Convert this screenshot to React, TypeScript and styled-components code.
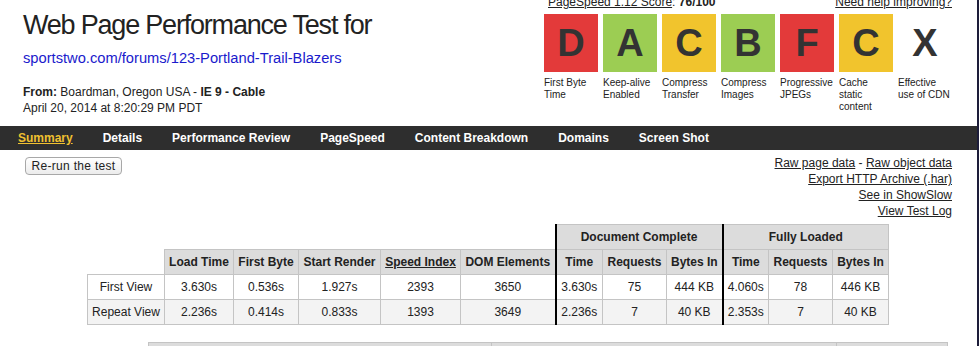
import React from "react";
import styled, { createGlobalStyle } from "styled-components";

const Global = createGlobalStyle`
  html, body { margin: 0; padding: 0; background: #fff; }
  body { font-family: "Liberation Sans", Arial, Helvetica, sans-serif; color: #222; overflow: hidden; }
`;

const Page = styled.div`
  width: 977px;
  height: 346px;
  border-right: 2px solid #1d1d3a;
  overflow: hidden;
`;

const Header = styled.header`
  display: flex;
  justify-content: space-between;
  align-items: flex-start;
  padding: 0 25px 0 23px;
  height: 126px;
`;

const TitleBlock = styled.div`
  padding-top: 8px;
`;

const Title = styled.h1`
  margin: 0;
  font-size: 27px;
  line-height: 34px;
  letter-spacing: -1.2px;
  font-weight: normal;
  color: #222;
`;

const UrlLink = styled.a`
  display: block;
  margin-top: 7px;
  font-size: 14.7px;
  line-height: 18px;
  color: #1a1acc;
  text-decoration: none;
`;

const Meta = styled.div`
  margin-top: 17px;
  font-size: 12px;
  line-height: 16px;
`;

const GradeBlock = styled.div`
  width: 408px;
  margin-top: -5px;
`;

const ScoreLine = styled.div`
  display: flex;
  justify-content: space-between;
  font-size: 12px;
  line-height: 14px;
  padding-left: 4px;
`;

const PlainLink = styled.a`
  color: #222;
  text-decoration: underline;
`;

const Grades = styled.div`
  display: flex;
  gap: 5px;
  margin-top: 5px;
`;

const Grade = styled.div`
  width: 54px;
`;

const GradeBox = styled.div<{ $bg: string }>`
  height: 58px;
  background: ${(p) => p.$bg};
  display: flex;
  align-items: center;
  justify-content: center;
  font-size: 38px;
  font-weight: bold;
  color: #333;
`;

const GradeLabel = styled.div`
  margin-top: 5px;
  font-size: 10px;
  line-height: 12px;
  color: #222;
  white-space: nowrap;
`;

const Nav = styled.nav`
  display: flex;
  height: 24px;
  align-items: center;
  background: #2e2e2e;
  padding-left: 3px;
`;

const NavItem = styled.a<{ $active?: boolean }>`
  padding: 0 15px;
  font-size: 12px;
  font-weight: bold;
  color: ${(p) => (p.$active ? "#f0c030" : "#fff")};
  text-decoration: ${(p) => (p.$active ? "underline" : "none")};
`;

const Toolbar = styled.div`
  display: flex;
  justify-content: space-between;
  align-items: flex-start;
  padding: 0 25px;
`;

const Button = styled.button`
  margin-top: 7px;
  width: 97px;
  height: 18px;
  padding: 0;
  border: 1px solid #a8a8a8;
  border-radius: 4px;
  background: linear-gradient(#ffffff, #ececec);
  font-family: "Liberation Sans", Arial, sans-serif;
  font-size: 12px;
  letter-spacing: 0.3px;
  color: #222;
`;

const Links = styled.div`
  margin-top: 5px;
  text-align: right;
  font-size: 12px;
  line-height: 16px;
`;

const Table = styled.table`
  border-collapse: collapse;
  table-layout: fixed;
  width: 801px;
  margin: 5px auto 0 87px;
  font-size: 12px;
`;

const Cell = styled.td<{ $thick?: boolean; $bg?: string }>`
  height: 24px;
  padding: 0 4px;
  border: 1px solid #c4c4c4;
  text-align: center;
  white-space: nowrap;
  background: ${(p) => p.$bg || "transparent"};
  ${(p) => (p.$thick ? "border-left: 2px solid #000;" : "")}
`;

const Head = styled(Cell).attrs({ as: "th" })`
  background: #dcdcdc;
  font-weight: bold;
`;

const Blank = styled.th`
  border: none;
  background: transparent;
`;

const SecondTable = styled.div`
  display: grid;
  grid-template-columns: 343px 345px 112px;
  margin: 17px 0 0 148px;
`;

const SecondHead = styled.div`
  height: 24px;
  background: #dcdcdc;
  border: 1px solid #c4c4c4;
  border-right: none;
  &:last-child { border-right: 1px solid #c4c4c4; }
`;

const grades = [
  { l: "D", bg: "#e33a3a", t: ["First Byte", "Time"] },
  { l: "A", bg: "#9ccd53", t: ["Keep-alive", "Enabled"] },
  { l: "C", bg: "#f1c42d", t: ["Compress", "Transfer"] },
  { l: "B", bg: "#9ccd53", t: ["Compress", "Images"] },
  { l: "F", bg: "#e33a3a", t: ["Progressive", "JPEGs"] },
  { l: "C", bg: "#f1c42d", t: ["Cache", "static", "content"] },
  { l: "X", bg: "transparent", t: ["Effective", "use of CDN"] },
];

const navItems = ["Summary", "Details", "Performance Review", "PageSpeed", "Content Breakdown", "Domains", "Screen Shot"];

const rows = [
  { name: "First View", bg: "#fff", v: ["3.630s", "0.536s", "1.927s", "2393", "3650", "3.630s", "75", "444 KB", "4.060s", "78", "446 KB"] },
  { name: "Repeat View", bg: "#f3f3f3", v: ["2.236s", "0.414s", "0.833s", "1393", "3649", "2.236s", "7", "40 KB", "2.353s", "7", "40 KB"] },
];

const widths = [77, 69, 65, 82, 80, 95, 47, 64, 56, 46, 64, 56];

export default function App() {
  return (
    <Page>
      <Global />
      <Header>
        <TitleBlock>
          <Title>Web Page Performance Test for</Title>
          <UrlLink href="#">sportstwo.com/forums/123-Portland-Trail-Blazers</UrlLink>
          <Meta>
            <div>
              <b>From:</b> Boardman, Oregon USA - <b>IE 9 - Cable</b>
            </div>
            <div>April 20, 2014 at 8:20:29 PM PDT</div>
          </Meta>
        </TitleBlock>
        <GradeBlock>
          <ScoreLine>
            <span>
              <PlainLink href="#">PageSpeed 1.12 Score</PlainLink>: <b>76/100</b>
            </span>
            <PlainLink href="#">Need help improving?</PlainLink>
          </ScoreLine>
          <Grades>
            {grades.map((g, i) => (
              <Grade key={i}>
                <GradeBox $bg={g.bg}>{g.l}</GradeBox>
                <GradeLabel>
                  {g.t.map((t) => (
                    <div key={t}>{t}</div>
                  ))}
                </GradeLabel>
              </Grade>
            ))}
          </Grades>
        </GradeBlock>
      </Header>
      <Nav>
        {navItems.map((n, i) => (
          <NavItem key={n} href="#" $active={i === 0}>
            {n}
          </NavItem>
        ))}
      </Nav>
      <Toolbar>
        <Button>Re-run the test</Button>
        <Links>
          <div>
            <PlainLink href="#">Raw page data</PlainLink> - <PlainLink href="#">Raw object data</PlainLink>
          </div>
          <div>
            <PlainLink href="#">Export HTTP Archive (.har)</PlainLink>
          </div>
          <div>
            <PlainLink href="#">See in ShowSlow</PlainLink>
          </div>
          <div>
            <PlainLink href="#">View Test Log</PlainLink>
          </div>
        </Links>
      </Toolbar>
      <Table>
        <colgroup>
          {widths.map((w, i) => (
            <col key={i} style={{ width: w }} />
          ))}
        </colgroup>
        <thead>
          <tr>
            <Blank colSpan={6} />
            <Head colSpan={3} $thick>Document Complete</Head>
            <Head colSpan={3} $thick>Fully Loaded</Head>
          </tr>
          <tr>
            <Blank />
            <Head>Load Time</Head>
            <Head>First Byte</Head>
            <Head>Start Render</Head>
            <Head>
              <PlainLink href="#">Speed Index</PlainLink>
            </Head>
            <Head>DOM Elements</Head>
            <Head $thick>Time</Head>
            <Head>Requests</Head>
            <Head>Bytes In</Head>
            <Head $thick>Time</Head>
            <Head>Requests</Head>
            <Head>Bytes In</Head>
          </tr>
        </thead>
        <tbody>
          {rows.map((r) => (
            <tr key={r.name}>
              <Cell $bg={r.bg}>{r.name}</Cell>
              {r.v.map((v, i) => (
                <Cell key={i} $bg={r.bg} $thick={i === 5 || i === 8}>
                  {v}
                </Cell>
              ))}
            </tr>
          ))}
        </tbody>
      </Table>
      <SecondTable>
        <SecondHead />
        <SecondHead />
        <SecondHead />
      </SecondTable>
    </Page>
  );
}
